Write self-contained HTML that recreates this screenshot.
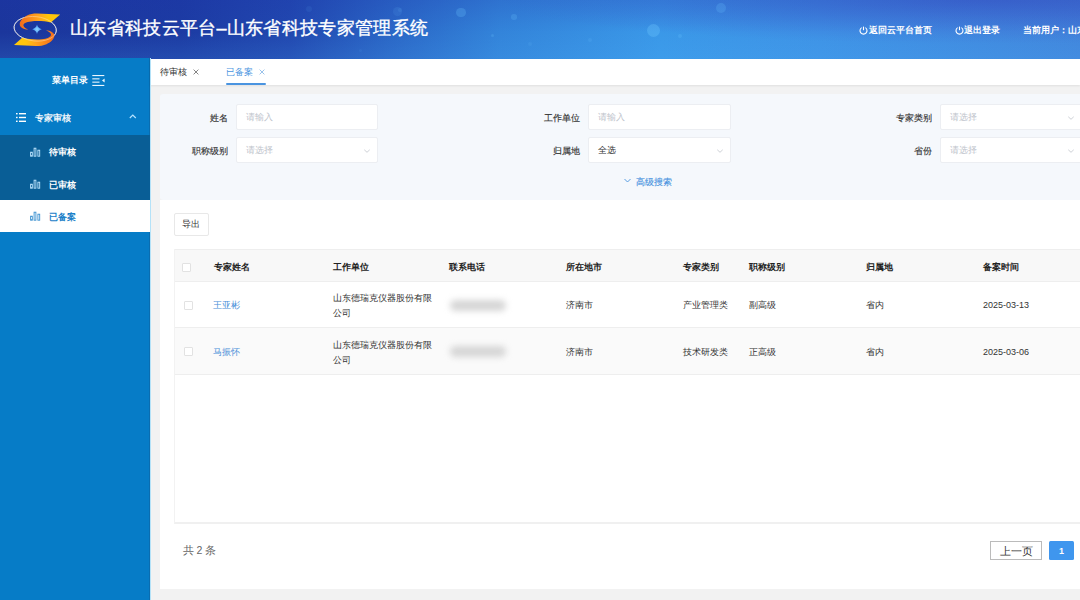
<!DOCTYPE html>
<html><head><meta charset="utf-8">
<style>
*{box-sizing:border-box;margin:0;padding:0}
html,body{width:1080px;height:600px;overflow:hidden;background:#f0f0f0;font-family:"Liberation Sans",sans-serif;color:#333}
#hdr{position:absolute;left:0;top:0;width:1080px;height:59px;overflow:hidden;
 background:radial-gradient(ellipse 480px 44px at 980px 0px,rgba(62,72,196,.45),rgba(62,72,196,0) 100%),
 linear-gradient(90deg,#1b369c 0px,#1c3ba3 180px,#2148b0 290px,#2a66c6 390px,#3384da 500px,#3a98e8 660px,#3e93e6 820px,#4186dc 1080px)}
#hdr:before{content:"";position:absolute;left:0;top:0;width:1080px;height:59px;background:linear-gradient(180deg,rgba(30,50,170,.22) 0%,rgba(30,50,170,0) 55%,rgba(80,180,250,.14) 100%)}
#hdr .title{position:absolute;left:70.2px;top:17px;font-size:18px;line-height:22px;color:#fff;letter-spacing:0.3px;white-space:nowrap;-webkit-text-stroke:0.35px #fff}
#hdr .links{position:absolute;top:23px;left:859px;font-size:9px;line-height:12px;color:#fff;white-space:nowrap}
#side{position:absolute;left:0;top:58px;width:150px;height:542px;background:#067cc7;box-shadow:inset -1px 0 #0a6db0}
#main{position:absolute;left:150px;top:59px;width:930px;height:541px;background:#f2f2f2}
#tabs{position:absolute;left:0;top:0;width:930px;height:26px;background:#fff;box-shadow:0 1px 2px rgba(0,0,0,.08)}
.tab{position:absolute;top:7px;font-size:9px;line-height:12px;color:#333;white-space:nowrap}
.tab .x{margin-left:6px;color:#888}
.tab.on{color:#4a94e0}
.tab.on .x{color:#8ab8e8}
#search{position:absolute;left:10px;top:35px;width:930px;height:106px;background:#f5f8fc;border-radius:3px}
.lbl{position:absolute;font-size:9px;line-height:12px;color:#333;text-align:right;white-space:nowrap;-webkit-text-stroke-width:0.15px}
.inp{position:absolute;height:26px;background:#fff;border:1px solid #eceef2;border-radius:2px;font-size:9px;line-height:25px;padding-left:9px;color:#c0c4cc;white-space:nowrap}
.inp.dark{color:#333}
.chev{position:absolute;right:7px;top:9.5px;width:6px;height:6px}
#card{position:absolute;left:10px;top:141px;width:930px;height:389px;background:#fff}
.btn{position:absolute;left:13.5px;top:13px;width:35.5px;height:23px;border:1px solid #e8e8e8;border-radius:2px;font-size:9px;line-height:21px;text-align:center;color:#333}
#tbl{position:absolute;left:14px;top:49px;width:920px;height:275px;border-bottom:2px solid #f0f0f0;border-left:1px solid #f2f2f2}
.th{position:absolute;left:0;top:0;width:920px;height:32.5px;background:#f8f8f8;border-top:1px solid #eee;border-bottom:1px solid #eee}
.row{position:absolute;left:0;width:920px;height:46.5px;border-bottom:1px solid #eee}
.c{position:absolute;font-size:9px;line-height:15px;white-space:nowrap;color:#333}
.th .c{font-weight:bold;color:#222}
.cb{position:absolute;left:8px;width:9px;height:9px;border:1px solid #e2e2e2;border-radius:1px;background:#fff}
.blur{position:absolute;left:275px;top:18px;width:56px;height:11px;background:#d6d6d6;border-radius:5.5px;filter:blur(3px)}
.pg{position:absolute;font-size:10px;text-align:center}
</style></head><body>
<div id="hdr">
 <svg style="position:absolute;left:0;top:0" width="70" height="58" viewBox="0 0 70 58">
 <defs>
 <linearGradient id="ly" x1="20" y1="0" x2="60" y2="0" gradientUnits="userSpaceOnUse"><stop offset="0" stop-color="#f26d1c"/><stop offset=".45" stop-color="#ffa21c"/><stop offset=".7" stop-color="#ffc40c"/><stop offset="1" stop-color="#ffc80a"/></linearGradient>
 <linearGradient id="ly2" x1="54" y1="0" x2="14" y2="0" gradientUnits="userSpaceOnUse"><stop offset="0" stop-color="#f26d1c"/><stop offset=".45" stop-color="#ffa21c"/><stop offset=".7" stop-color="#ffc40c"/><stop offset="1" stop-color="#ffc80a"/></linearGradient>
 <radialGradient id="st" cx="37" cy="29.3" r="5" gradientUnits="userSpaceOnUse"><stop offset="0" stop-color="#8fd4ff"/><stop offset="1" stop-color="#3a8ef0"/></radialGradient>
 </defs>
 <ellipse cx="35.2" cy="28.8" rx="21.2" ry="12.2" fill="none" stroke="#c4d4ff" stroke-width="0.9" transform="rotate(6 35.2 28.8)"/>
 <path d="M60.2 14.6 L50.8 22.4 C45 21.2 38 20.8 31 21.4 C26 22 23 23.5 23.4 25.6 C23.8 27.4 26 28.8 28.2 29.8 C24 29.4 20.2 27.6 19.8 25 C19.3 21.5 22.5 17.8 27 15.6 C30 14.2 33 13.6 37 13.6 Z" fill="url(#ly)"/>
 <path d="M14 44.9 L22.2 37.8 C28 39.2 35 39.8 42 39.3 C47 38.8 50.8 37 51 35 C51.2 33 48.6 31.2 46 30.2 C50.5 30.6 54.2 32.6 54.4 35.3 C54.6 38.8 51 42.2 46.5 44.2 C43.5 45.5 40 46 36 46 Z" fill="url(#ly2)"/>
 <ellipse cx="35.2" cy="28.8" rx="21.2" ry="12.2" fill="none" stroke="#ffe8c0" stroke-opacity=".5" stroke-width="0.9" transform="rotate(6 35.2 28.8)"/>
 <path d="M37 24.6 Q37.8 28.4 41.8 29.3 Q37.8 30.2 37 34 Q36.2 30.2 32.2 29.3 Q36.2 28.4 37 24.6Z" fill="url(#st)"/>
</svg>
 <div style="position:absolute;left:456.2px;top:7.8px;width:9.6px;height:9.6px;border-radius:50%;background:rgba(110,200,255,0.245)"></div><div style="position:absolute;left:511.2px;top:14.2px;width:5.6px;height:5.6px;border-radius:50%;background:rgba(110,200,255,0.210)"></div><div style="position:absolute;left:647.0px;top:24.0px;width:13.0px;height:13.0px;border-radius:50%;background:rgba(110,200,255,0.315)"></div><div style="position:absolute;left:715.5px;top:3px;width:10px;height:10px;border-radius:50%;background:rgba(110,200,255,0.210)"></div><div style="position:absolute;left:490.5px;top:33.5px;width:3.0px;height:3.0px;border-radius:50%;background:rgba(110,200,255,0.210)"></div><div style="position:absolute;left:678px;top:34px;width:4px;height:4px;border-radius:50%;background:rgba(110,200,255,0.210)"></div><div style="position:absolute;left:398px;top:8px;width:4px;height:4px;border-radius:50%;background:rgba(110,200,255,0.105)"></div><div style="position:absolute;left:588px;top:38px;width:4px;height:4px;border-radius:50%;background:rgba(110,200,255,0.140)"></div><div style="position:absolute;left:306px;top:5.6px;width:6px;height:6px;border-radius:50%;background:rgba(110,200,255,0.084)"></div><div style="position:absolute;left:392.5px;top:6.5px;width:9.0px;height:9.0px;border-radius:50%;background:rgba(110,200,255,0.105)"></div><div style="position:absolute;left:528px;top:42px;width:4px;height:4px;border-radius:50%;background:rgba(110,200,255,0.105)"></div><div style="position:absolute;left:358.5px;top:48.5px;width:3.0px;height:3.0px;border-radius:50%;background:rgba(110,200,255,0.084)"></div>
 <div class="title">山东省科技云平台–山东省科技专家管理系统</div>
 <svg style="position:absolute;left:859px;top:25px" width="9" height="10" viewBox="0 0 9 10"><path d="M2.7 2.6 A3.5 3.5 0 1 0 6.3 2.6" fill="none" stroke="#fff" stroke-width="1.1"/><path d="M4.5 1.6 V5.2" stroke="#fff" stroke-width="1.1"/></svg><div style="position:absolute;left:869px;top:23.5px;font-size:9px;line-height:12px;color:#fff;font-weight:bold;white-space:nowrap">返回云平台首页</div><svg style="position:absolute;left:955px;top:25px" width="9" height="10" viewBox="0 0 9 10"><path d="M2.7 2.6 A3.5 3.5 0 1 0 6.3 2.6" fill="none" stroke="#fff" stroke-width="1.1"/><path d="M4.5 1.6 V5.2" stroke="#fff" stroke-width="1.1"/></svg><div style="position:absolute;left:964px;top:23.5px;font-size:9px;line-height:12px;color:#fff;font-weight:bold;white-space:nowrap">退出登录</div><div style="position:absolute;left:1023px;top:23.5px;font-size:9px;line-height:12px;color:#fff;font-weight:bold;white-space:nowrap">当前用户：山东</div>
</div>
<div id="side">
 <div class="st" style="position:absolute;left:52px;top:16px;font-size:9px;line-height:12px;color:#fff;font-weight:bold">菜单目录</div>
 <svg style="position:absolute;left:92px;top:16.5px" width="14" height="12" viewBox="0 0 14 12"><g fill="#eaf6ff"><rect x="0.3" y="0" width="12" height="1.1"/><rect x="0.3" y="3.3" width="7.2" height="1.1"/><rect x="0.3" y="6.6" width="7.2" height="1.1"/><rect x="0.3" y="9.9" width="12" height="1.1"/><path d="M12.6 3.6 L10 5.5 L12.6 7.4Z"/></g></svg>
 <div style="position:absolute;left:0;top:42px;width:150px;height:35px"></div>
 <svg style="position:absolute;left:16px;top:55px" width="10" height="9" viewBox="0 0 10 9"><g fill="#fff"><rect x="0" y="0" width="1.6" height="1.4"/><rect x="3" y="0" width="7" height="1.4"/><rect x="0" y="3.8" width="1.6" height="1.4"/><rect x="3" y="3.8" width="7" height="1.4"/><rect x="0" y="7.6" width="1.6" height="1.4"/><rect x="3" y="7.6" width="7" height="1.4"/></g></svg>
 <div style="position:absolute;left:35px;top:54px;font-size:9px;line-height:12px;color:#fff;-webkit-text-stroke:0.25px #fff">专家审核</div>
 <svg style="position:absolute;left:129px;top:55.5px" width="8" height="5" viewBox="0 0 8 5"><path d="M0.8 4 L3.8 1 L6.8 4" fill="none" stroke="#b4e2ff" stroke-width="1.2"/></svg>
 <div style="position:absolute;left:0;top:77px;width:150px;height:65px;background:#095e96"></div>
 <div style="position:absolute;left:0;top:142px;width:150px;height:32px;background:#fff"></div>
 <svg style="position:absolute;left:29px;top:89px" width="12" height="10" viewBox="0 0 12 10"><g fill="none" stroke="#bfe6ff" stroke-width="0.9"><rect x="1.6" y="5.2" width="1.7" height="4"/><rect x="5.1" y="1.2" width="1.8" height="8"/><rect x="8.9" y="3.2" width="1.8" height="6"/></g></svg>
 <div style="position:absolute;left:49px;top:88px;font-size:9px;line-height:12px;color:#fff;font-weight:bold">待审核</div>
 <svg style="position:absolute;left:29px;top:121px" width="12" height="10" viewBox="0 0 12 10"><g fill="none" stroke="#bfe6ff" stroke-width="0.9"><rect x="1.6" y="5.2" width="1.7" height="4"/><rect x="5.1" y="1.2" width="1.8" height="8"/><rect x="8.9" y="3.2" width="1.8" height="6"/></g></svg>
 <div style="position:absolute;left:49px;top:121px;font-size:9px;line-height:12px;color:#fff;font-weight:bold">已审核</div>
 <svg style="position:absolute;left:29px;top:153px" width="12" height="10" viewBox="0 0 12 10"><g fill="none" stroke="#3a90d0" stroke-width="0.9"><rect x="1.6" y="5.2" width="1.7" height="4"/><rect x="5.1" y="1.2" width="1.8" height="8"/><rect x="8.9" y="3.2" width="1.8" height="6"/></g></svg>
 <div style="position:absolute;left:49px;top:153px;font-size:9px;line-height:12px;color:#1a80c8;font-weight:bold">已备案</div>
</div>
<div id="main">
 <div id="tabs">
  <div class="tab" style="left:10.3px">待审核<svg style="position:absolute;left:32.5px;top:2.6px" width="6" height="6" viewBox="0 0 6 6"><path d="M0.6 0.6 L5.4 5.4 M5.4 0.6 L0.6 5.4" stroke="#777" stroke-width="0.9"/></svg></div>
  <div class="tab on" style="left:76.3px">已备案<svg style="position:absolute;left:33px;top:2.6px" width="6" height="6" viewBox="0 0 6 6"><path d="M0.6 0.6 L5.4 5.4 M5.4 0.6 L0.6 5.4" stroke="#8fbbe8" stroke-width="0.9"/></svg></div><div style="position:absolute;left:76px;top:24px;width:39.5px;height:1.7px;background:#4a94e0;border-radius:1px"></div>
 </div>
 <div id="search">
  <div class="lbl" style="right:862px;top:18px">姓名</div>
  <div class="inp" style="left:76px;top:10px;width:142px">请输入</div>
  <div class="lbl" style="right:510px;top:18px">工作单位</div>
  <div class="inp" style="left:428px;top:10px;width:143px">请输入</div>
  <div class="lbl" style="right:158px;top:18px">专家类别</div>
  <div class="inp" style="left:780px;top:10px;width:142px">请选择<svg class="chev" viewBox="0 0 6 6"><path d="M0.3 1.8 L3 4.3 L5.7 1.8" fill="none" stroke="#c0c4cc" stroke-width="0.8"/></svg></div>
  <div class="lbl" style="right:862px;top:51px">职称级别</div>
  <div class="inp" style="left:76px;top:43px;width:142px">请选择<svg class="chev" viewBox="0 0 6 6"><path d="M0.3 1.8 L3 4.3 L5.7 1.8" fill="none" stroke="#c0c4cc" stroke-width="0.8"/></svg></div>
  <div class="lbl" style="right:510px;top:51px">归属地</div>
  <div class="inp dark" style="left:428px;top:43px;width:143px">全选<svg class="chev" viewBox="0 0 6 6"><path d="M0.3 1.8 L3 4.3 L5.7 1.8" fill="none" stroke="#c0c4cc" stroke-width="0.8"/></svg></div>
  <div class="lbl" style="right:158px;top:51px">省份</div>
  <div class="inp" style="left:780px;top:43px;width:142px">请选择<svg class="chev" viewBox="0 0 6 6"><path d="M0.3 1.8 L3 4.3 L5.7 1.8" fill="none" stroke="#c0c4cc" stroke-width="0.8"/></svg></div>
  <svg style="position:absolute;left:464px;top:84px" width="7" height="5" viewBox="0 0 7 5"><path d="M0.5 1 L3.5 4 L6.5 1" fill="none" stroke="#4a94e0" stroke-width="0.9"/></svg>
  <div class="lbl" style="left:476px;top:82px;color:#4a94e0">高级搜索</div>
 </div>
 <div id="card">
  <div class="btn">导出</div>
  <div id="tbl"><div class="th"><div class="cb" style="top:13px;left:6.5px"></div><div class="c" style="left:39px;top:10px;">专家姓名</div><div class="c" style="left:158px;top:10px;">工作单位</div><div class="c" style="left:274px;top:10px;">联系电话</div><div class="c" style="left:391px;top:10px;">所在地市</div><div class="c" style="left:508px;top:10px;">专家类别</div><div class="c" style="left:574px;top:10px;">职称级别</div><div class="c" style="left:691px;top:10px;">归属地</div><div class="c" style="left:808px;top:10px;">备案时间</div></div><div class="row" style="top:32.5px;background:#fff"><div class="cb" style="top:19px;left:9px"></div><div class="c" style="left:38px;top:16.7px;color:#4a90d9">王亚彬</div><div class="c" style="left:158px;top:9.7px;">山东德瑞克仪器股份有限<br>公司</div><div class="blur"></div><div class="c" style="left:391px;top:16.7px;">济南市</div><div class="c" style="left:508px;top:16.7px;">产业管理类</div><div class="c" style="left:574px;top:16.7px;">副高级</div><div class="c" style="left:691px;top:16.7px;">省内</div><div class="c" style="left:808px;top:16.7px;">2025-03-13</div></div><div class="row" style="top:79px;background:#fafafa"><div class="cb" style="top:19px;left:9px"></div><div class="c" style="left:38px;top:16.7px;color:#4a90d9">马振怀</div><div class="c" style="left:158px;top:9.7px;">山东德瑞克仪器股份有限<br>公司</div><div class="blur"></div><div class="c" style="left:391px;top:16.7px;">济南市</div><div class="c" style="left:508px;top:16.7px;">技术研发类</div><div class="c" style="left:574px;top:16.7px;">正高级</div><div class="c" style="left:691px;top:16.7px;">省内</div><div class="c" style="left:808px;top:16.7px;">2025-03-06</div></div></div>
  <div style="position:absolute;left:22.7px;top:344.2px;font-size:10.5px;line-height:12px;color:#666;white-space:nowrap">共 2 条</div>
  <div class="pg" style="left:830px;top:341px;width:52px;height:19px;border:1px solid #bbb;line-height:19px;font-size:10.5px;color:#333">上一页</div>
  <div class="pg" style="left:889px;top:341px;width:25px;height:18.5px;background:#3f96ee;border-radius:1.5px;line-height:20px;font-size:9px;color:#fff;font-weight:bold">1</div>
 </div>
</div>
<div style="position:absolute;left:150px;top:58px;width:1px;height:542px;background:#b4e2f8"></div>
</body></html>
